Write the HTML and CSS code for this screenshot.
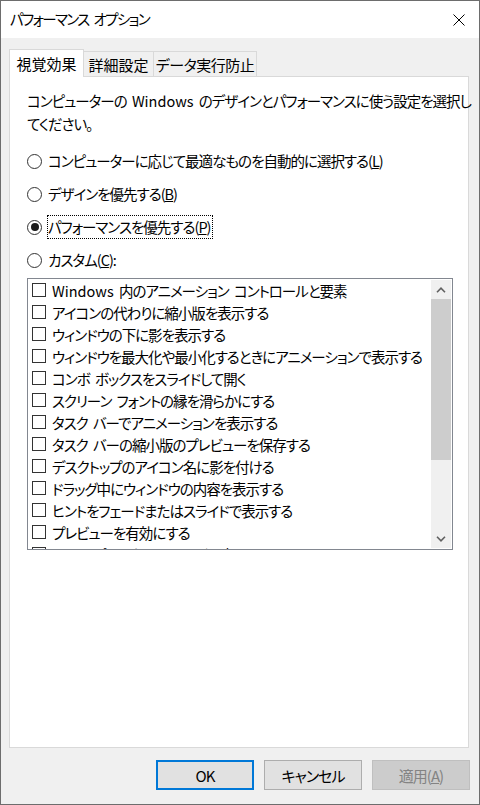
FILE: index.html
```html
<!DOCTYPE html>
<html lang="ja">
<head>
<meta charset="utf-8">
<title>パフォーマンス オプション</title>
<link rel="stylesheet" href="styles.css">
</head>
<body>
<div class="window">
  <div class="titlebar">
    <span class="title">パフォーマンス オプション</span>
    <div class="close">
      <svg width="12" height="12" viewBox="0 0 12 12"><path d="M0.5 0.5 L11.5 11.5 M11.5 0.5 L0.5 11.5" stroke="#000" stroke-width="1" fill="none"/></svg>
    </div>
  </div>
  <div class="body">
    <div class="tabs">
      <div class="tab active t1">視覚効果</div>
      <div class="tab t2">詳細設定</div>
      <div class="tab t3">データ実行防止</div>
    </div>
    <div class="panel">
      <p class="desc">コンピューターの <span class="lat">Windows</span> のデザインとパフォーマンスに使う設定を選択し<br>てください。</p>
      <div class="radios">
        <div class="radio"><span class="rb"></span><span class="rl">コンピューターに応じて最適なものを自動的に選択する(<u>L</u>)</span></div>
        <div class="radio"><span class="rb"></span><span class="rl">デザインを優先する(<u>B</u>)</span></div>
        <div class="radio"><span class="rb checked"></span><span class="rl focus">パフォーマンスを優先する(<u>P</u>)</span></div>
        <div class="radio"><span class="rb"></span><span class="rl">カスタム(<u>C</u>):</span></div>
      </div>
      <div class="listbox">
        <div class="items">
          <div class="row"><span class="cb"></span><span class="lat">Windows</span>&nbsp;内のアニメーション コントロールと要素</div>
          <div class="row"><span class="cb"></span>アイコンの代わりに縮小版を表示する</div>
          <div class="row"><span class="cb"></span>ウィンドウの下に影を表示する</div>
          <div class="row"><span class="cb"></span>ウィンドウを最大化や最小化するときにアニメーションで表示する</div>
          <div class="row"><span class="cb"></span>コンボ ボックスをスライドして開く</div>
          <div class="row"><span class="cb"></span>スクリーン フォントの縁を滑らかにする</div>
          <div class="row"><span class="cb"></span>タスク バーでアニメーションを表示する</div>
          <div class="row"><span class="cb"></span>タスク バーの縮小版のプレビューを保存する</div>
          <div class="row"><span class="cb"></span>デスクトップのアイコン名に影を付ける</div>
          <div class="row"><span class="cb"></span>ドラッグ中にウィンドウの内容を表示する</div>
          <div class="row"><span class="cb"></span>ヒントをフェードまたはスライドで表示する</div>
          <div class="row"><span class="cb"></span>プレビューを有効にする</div>
          <div class="row"><span class="cb"></span>マウス ポインターの下に影を表示する</div>
        </div>
        <div class="scrollbar">
          <div class="sb-btn"><svg width="10" height="6" viewBox="0 0 10 6"><polyline points="1,5.2 5,1.2 9,5.2" fill="none" stroke="#606060" stroke-width="1.6"/></svg></div>
          <div class="thumb"></div>
          <div class="track"></div>
          <div class="sb-btn"><svg width="10" height="6" viewBox="0 0 10 6"><polyline points="1,0.8 5,4.8 9,0.8" fill="none" stroke="#606060" stroke-width="1.6"/></svg></div>
        </div>
      </div>
    </div>
    <div class="buttons">
      <div class="btn default">OK</div>
      <div class="btn">キャンセル</div>
      <div class="btn disabled">適用(<u>A</u>)</div>
    </div>
  </div>
</div>
</body>
</html>
```
FILE: styles.css
```css
* { box-sizing: border-box; }
html, body { margin: 0; padding: 0; }
body {
  font-family: "Noto Sans CJK JP", "Noto Sans", sans-serif;
  font-size: 14.5px;
  letter-spacing: -1px;
  word-spacing: 3px;
  color: #000;
  font-feature-settings: "palt";
}
.lat { letter-spacing: 0; }
.window {
  width: 480px;
  height: 805px;
  border: 1px solid #6d6d6d;
  background: #f0f0f0;
  display: flex;
  flex-direction: column;
}
.titlebar {
  height: 37px;
  flex-shrink: 0;
  background: #fff;
  display: flex;
  align-items: center;
  padding-left: 9px;
}
.title { line-height: 1; letter-spacing: -1.6px; word-spacing: 3px; }
.close {
  margin-left: auto;
  width: 40px;
  height: 37px;
  display: flex;
  align-items: center;
  justify-content: center;
}
.body { padding: 11px 10px 0 8px; }
.tabs {
  display: flex;
  align-items: flex-end;
  height: 28px;
  margin-bottom: -1px;
  position: relative;
  z-index: 1;
}
.tab {
  height: 26px;
  border: 1px solid #d9d9d9;
  background: #f0f0f0;
  display: flex;
  align-items: center;
  justify-content: center;
  line-height: 1;
  margin-left: -1px;
  font-size: 15px;
  letter-spacing: 0;
}
.tab.active {
  height: 28px;
  background: #fff;
  border-bottom: none;
  margin-left: 0;
  position: relative;
  z-index: 2;
}
.t1 { width: 75px; }
.t2 { width: 71px; }
.t3 { width: 104px; letter-spacing: -0.5px; }
.panel {
  height: 672px;
  background: #fff;
  border: 1px solid #d9d9d9;
  padding: 12px 0 0 17px;
}
.desc { margin: 0; line-height: 23px; white-space: nowrap; }
.radios {
  margin-top: 14px;
  display: flex;
  flex-direction: column;
  gap: 9px;
}
.radio { display: flex; align-items: center; height: 24px; }
.rb {
  width: 15px;
  height: 15px;
  border: 1px solid #333;
  border-radius: 50%;
  margin-right: 5px;
  flex-shrink: 0;
  display: flex;
  align-items: center;
  justify-content: center;
}
.rb.checked::after {
  content: "";
  width: 8px;
  height: 8px;
  border-radius: 50%;
  background: #1a1a1a;
}
.rl {
  border: 1px dotted transparent;
  line-height: 22px;
  padding-right: 2px;
}
.rl.focus { border-color: #000; }
.listbox {
  margin-top: 6px;
  width: 426px;
  height: 272px;
  border: 1px solid #828790;
  display: flex;
  background: #fff;
}
.items {
  flex: 1;
  overflow: hidden;
  padding-left: 4px;
}
.row {
  height: 22px;
  display: flex;
  align-items: center;
  white-space: nowrap;
}
.cb {
  width: 14px;
  height: 14px;
  border: 1px solid #333;
  margin-right: 6px;
  flex-shrink: 0;
}
.scrollbar {
  width: 20px;
  margin: 1px 1px 1px 0;
  background: #f0f0f0;
  display: flex;
  flex-direction: column;
}
.sb-btn {
  height: 19px;
  display: flex;
  align-items: center;
  justify-content: center;
}
.thumb { height: 161px; background: #cdcdcd; }
.track { flex: 1; }
.buttons {
  display: flex;
  justify-content: flex-end;
  gap: 10px;
  padding-top: 12px;
  margin-right: -1px;
}
.btn {
  width: 98px;
  height: 30px;
  border: 1px solid #adadad;
  background: #e1e1e1;
  display: flex;
  align-items: center;
  justify-content: center;
  line-height: 1;
  font-size: 15px;
}
.btn.default { border: 2px solid #0078d7; }
.btn.disabled { background: #cccccc; border-color: #bfbfbf; color: #838383; }
```
